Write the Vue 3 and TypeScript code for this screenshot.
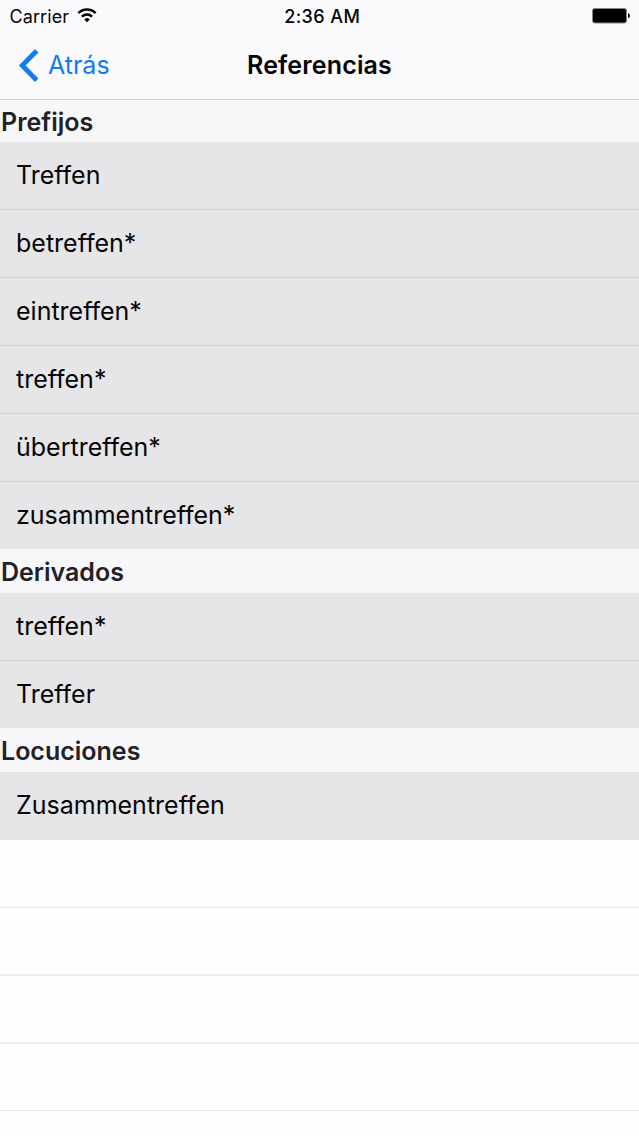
<script setup lang="ts">
interface Section { title: string; rows: string[] }

const sections: Section[] = [
  {
    title: 'Prefijos',
    rows: ['Treffen', 'betreffen*', 'eintreffen*', 'treffen*', 'übertreffen*', 'zusammentreffen*'],
  },
  { title: 'Derivados', rows: ['treffen*', 'Treffer'] },
  { title: 'Locuciones', rows: ['Zusammentreffen'] },
]
const emptyRows = 4
</script>

<template>
  <div class="screen">
    <header class="top">
      <div class="status">
        <div class="carrier">
          <span>Carrier</span>
          <svg class="wifi" width="20" height="15" viewBox="0 0 20 15" fill="none" stroke="#000" stroke-width="2.5">
            <path d="M1.4 5.1a12.2 12.2 0 0 1 17.2 0" />
            <path d="M4.9 8.7a7.2 7.2 0 0 1 10.2 0" />
            <path d="M10 14.3 7.3 11.6a3 3 0 0 1 5.4 0z" fill="#000" stroke="none" />
          </svg>
        </div>
        <span class="time">2:36 AM</span>
        <svg class="battery" width="38" height="16" viewBox="0 0 38 16">
          <rect x="0.5" y="0.5" width="34" height="14.5" rx="2.2" fill="#000" stroke="#858488" />
          <path d="M36 5.3c2.6.5 2.6 4.4 0 4.9z" />
        </svg>
      </div>
      <nav class="nav">
        <div class="back">
          <svg width="21" height="33" viewBox="0 0 21 33" fill="none" stroke="#107cee" stroke-width="4.8">
            <path d="M18.7 1.8 4.2 16.5l14.5 14.7" />
          </svg>
          <span>Atrás</span>
        </div>
        <h1 class="title">Referencias</h1>
      </nav>
    </header>
    <section v-for="s in sections" :key="s.title" class="group">
      <h2 class="heading">{{ s.title }}</h2>
      <div v-for="r in s.rows" :key="r" class="row">{{ r }}</div>
    </section>
    <div class="blanks">
      <div v-for="n in emptyRows" :key="n" class="blank"></div>
    </div>
  </div>
</template>

<style>
body { margin: 0; overflow: hidden; }
</style>

<style scoped>
.screen { width: 639px; height: 1136px; overflow: hidden; background: #fefefe; font-family: Inter, "Liberation Sans", sans-serif; color: #050507; }
.top { height: 100px; box-sizing: border-box; background: #faf9fc; border-bottom: 1px solid #d0cfd2; }
.status { height: 32px; display: grid; grid-template-columns: 1fr auto 1fr; align-items: center; padding: 0 9px 0 9.5px; font-size: 18px; }
.carrier { display: flex; gap: 8px; align-items: center; letter-spacing: 0.1px; }
.wifi { margin-top: -2px; }
.time { font-weight: 500; letter-spacing: 0.4px; margin-left: 5px; }
.battery { justify-self: end; }
.nav { height: 67px; display: grid; grid-template-columns: 1fr auto 1fr; align-items: center; padding: 0 0 2px; box-sizing: border-box; }
.back { display: flex; align-items: center; gap: 9px; padding: 1px 0 0 18px; font-size: 25px; color: #107cee; }
.title { margin: 0; font-size: 25px; font-weight: 600; letter-spacing: 0.15px; }
.heading { margin: 0; height: 44px; line-height: 47px; background: #f7f6f9; color: #222125; font-size: 25px; font-weight: 600; padding-left: 1px; }
.group:first-of-type .heading { height: 42px; line-height: 44px; }
.row { height: 68px; box-sizing: border-box; line-height: 66px; padding-left: 16px; background: #e6e5e8; border-bottom: 1px solid #d3d2d5; font-size: 25px; }
.row:last-child { height: 67px; border-bottom: 0; }
.group:last-of-type .row { height: 68px; }
.blank { height: 68px; box-sizing: border-box; border-bottom: 1px solid #e3e3e4; }
.blank:nth-child(2), .blank:nth-child(3) { border-bottom: 2px solid #eeeeef; }
.blank:last-child { height: 67px; }
</style>
